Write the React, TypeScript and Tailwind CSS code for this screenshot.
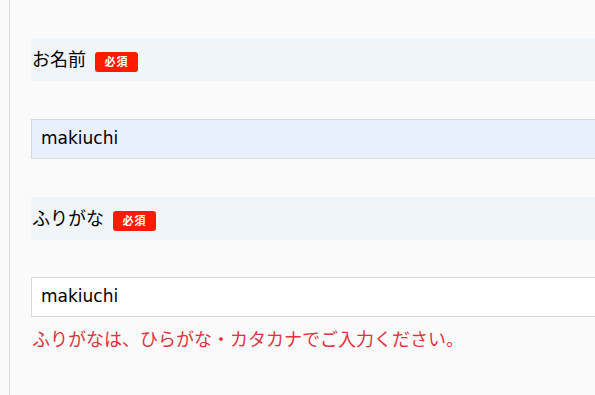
import React from "react";

const font = { fontFamily: '"DejaVu Sans", "Noto Sans CJK JP", sans-serif' };

const Badge = (): React.ReactElement => (
  <span className="ml-[9px] mt-[5px] flex h-[20px] w-[43px] items-center justify-center rounded-[3px] bg-[#ff1a00] text-[11px] font-bold leading-none tracking-[1px] text-white">
    必須
  </span>
);

const Label = ({ text }: { text: string }): React.ReactElement => (
  <div className="flex h-[43px] items-center bg-[#f0f5fa] pl-[1px] text-[18px] text-black">
    <span className="leading-none">{text}</span>
    <Badge />
  </div>
);

const Field = ({ value, filled }: { value: string; filled?: boolean }) => (
  <div
    className={`flex h-[40px] items-center border border-[#d9d9d9] pl-[9px] text-[17px] text-black ${
      filled ? "bg-[#e8f0fe]" : "bg-white"
    }`}
  >
    {value}
  </div>
);

const App = (): React.ReactElement => {
  return (
    <div className="h-[395px] w-[595px] overflow-hidden bg-[#fafafa]" style={font}>
      <div className="ml-[9px] h-full w-[620px] border-l border-[#dcdcdc] pl-[21px] pt-[38px]">
        <Label text="お名前" />
        <div className="mt-[38px]">
          <Field value="makiuchi" filled />
        </div>
        <div className="mt-[38px]">
          <Label text="ふりがな" />
        </div>
        <div className="mt-[37px]">
          <Field value="makiuchi" />
        </div>
        <p className="mt-[10px] pl-[1px] text-[18px] leading-[26px] text-[#e0323c]">
          ふりがなは、ひらがな・カタカナでご入力ください。
        </p>
      </div>
    </div>
  );
};

export default App;
